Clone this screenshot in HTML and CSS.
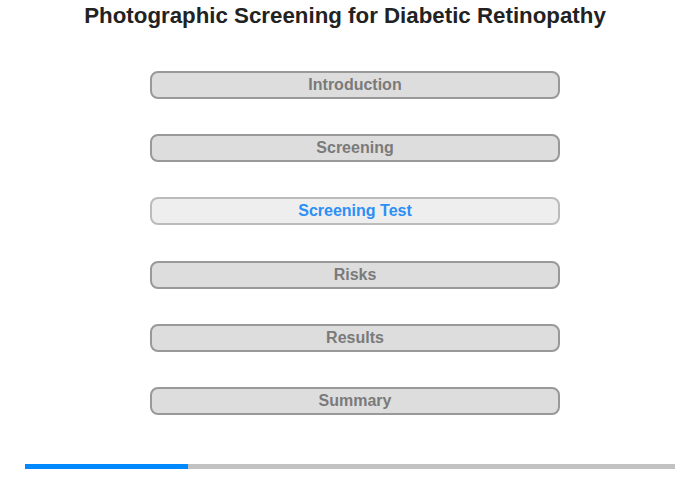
FILE: index.html
```html
<!DOCTYPE html>
<html>
<head>
<meta charset="utf-8">
<link rel="stylesheet" href="styles.css">
</head>
<body>
<div class="page">
  <h1 class="title">Photographic Screening for Diabetic Retinopathy</h1>
  <nav class="menu">
    <div class="item">Introduction</div>
    <div class="item">Screening</div>
    <div class="item active">Screening Test</div>
    <div class="item">Risks</div>
    <div class="item">Results</div>
    <div class="item">Summary</div>
  </nav>
  <div class="progress"><div class="fill" style="width:25%"></div></div>
</div>
</body>
</html>
```
FILE: styles.css
```css
html, body {
  margin: 0;
  padding: 0;
  background: #fff;
  font-family: "Liberation Sans", Arial, sans-serif;
}
.page {
  width: 700px;
  height: 480px;
  display: flex;
  flex-direction: column;
}
.title {
  margin: 3px 0 0 -10px;
  font-size: 22.3px;
  line-height: 26px;
  font-weight: bold;
  color: #222;
  text-align: center;
}
.menu {
  margin-top: 42px;
  display: flex;
  flex-direction: column;
  align-items: center;
  gap: 35.2px;
  padding-left: 10px;
}
.item {
  box-sizing: border-box;
  width: 410px;
  height: 28px;
  border: 2px solid #999;
  border-radius: 8px;
  background: #ddd;
  color: #7a7a7a;
  font-size: 16px;
  font-weight: bold;
  line-height: 24px;
  text-align: center;
}
.item.active {
  background: #eee;
  border-color: #bbb;
  color: #2b8ff5;
}
.progress {
  margin: 49px 25px 0 25px;
  height: 5px;
  background: #c2c2c2;
}
.fill {
  height: 100%;
  background: #0088ff;
}
```
